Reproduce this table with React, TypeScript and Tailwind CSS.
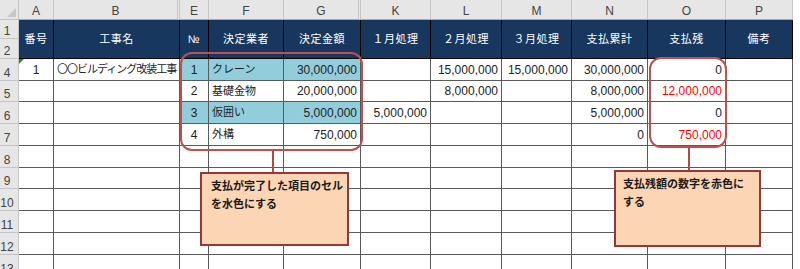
import React from 'react';

const cols = [
  { k: 'A', w: 'w-[35px]', band: 'border-r' },
  { k: 'B', w: 'w-[126px]', band: 'border-r-[3px] border-double' },
  { k: 'E', w: 'w-[29px]', band: 'border-r' },
  { k: 'F', w: 'w-[75px]', band: 'border-r' },
  { k: 'G', w: 'w-[77px]', band: 'border-r-[3px] border-double' },
  { k: 'K', w: 'w-[70px]', band: 'border-r' },
  { k: 'L', w: 'w-[71px]', band: 'border-r' },
  { k: 'M', w: 'w-[70px]', band: 'border-r' },
  { k: 'N', w: 'w-[76px]', band: 'border-r' },
  { k: 'O', w: 'w-[78px]', band: 'border-r' },
  { k: 'P', w: 'w-[67px]', band: 'border-r' },
];

const headers = ['番号', '工事名', '№', '決定業者', '決定金額', '１月処理', '２月処理', '３月処理', '支払累計', '支払残', '備考'];

type Cell = { v?: string; align?: 'l' | 'c' | 'r'; fill?: boolean; red?: boolean; tight?: boolean };

const dataRows: { n: number; h: string; cells: Cell[] }[] = [
  {
    n: 4,
    h: 'h-[22px]',
    cells: [
      { v: '1', align: 'c' },
      { v: '〇〇ビルディング改装工事', align: 'l', tight: true },
      { v: '1', align: 'c', fill: true },
      { v: 'クレーン', align: 'l', fill: true },
      { v: '30,000,000', align: 'r', fill: true },
      {},
      { v: '15,000,000', align: 'r' },
      { v: '15,000,000', align: 'r' },
      { v: '30,000,000', align: 'r' },
      { v: '0', align: 'r' },
      {},
    ],
  },
  {
    n: 5,
    h: 'h-[21px]',
    cells: [
      {},
      {},
      { v: '2', align: 'c' },
      { v: '基礎金物', align: 'l' },
      { v: '20,000,000', align: 'r' },
      {},
      { v: '8,000,000', align: 'r' },
      {},
      { v: '8,000,000', align: 'r' },
      { v: '12,000,000', align: 'r', red: true },
      {},
    ],
  },
  {
    n: 6,
    h: 'h-[22px]',
    cells: [
      {},
      {},
      { v: '3', align: 'c', fill: true },
      { v: '仮囲い', align: 'l', fill: true },
      { v: '5,000,000', align: 'r', fill: true },
      { v: '5,000,000', align: 'r' },
      {},
      {},
      { v: '5,000,000', align: 'r' },
      { v: '0', align: 'r' },
      {},
    ],
  },
  {
    n: 7,
    h: 'h-[22px]',
    cells: [
      {},
      {},
      { v: '4', align: 'c' },
      { v: '外構', align: 'l' },
      { v: '750,000', align: 'r' },
      {},
      {},
      {},
      { v: '0', align: 'r' },
      { v: '750,000', align: 'r', red: true },
      {},
    ],
  },
  { n: 8, h: 'h-[22px]', cells: [] },
  { n: 9, h: 'h-[21px]', cells: [] },
  { n: 10, h: 'h-[22px]', cells: [] },
  { n: 11, h: 'h-[22px]', cells: [] },
  { n: 12, h: 'h-[22px]', cells: [] },
  { n: 13, h: 'h-[22px]', cells: [] },
];

function RowLabel({ n, h }: { n: number; h: string }) {
  return (
    <div className={`w-[19px] shrink-0 ${h} bg-[#e6e6e6] border-r border-b border-[#c4c4c4] flex items-end`}>
      <span className="w-[14px] text-center text-[12px] leading-none text-[#444] pb-[1px]">{n}</span>
    </div>
  );
}

export default function App() {
  return (
    <div className="relative w-[800px] h-[269px] overflow-hidden bg-white font-['Liberation_Sans','Noto_Sans_CJK_JP',sans-serif] text-[#222]">
      {/* column letters */}
      <div className="flex h-[20px]">
        <div className="w-[19px] shrink-0 bg-[#e6e6e6] border-r border-b border-[#c4c4c4] relative">
          <div className="absolute right-[2px] bottom-[2px] w-0 h-0 border-l-[9px] border-l-transparent border-b-[9px] border-b-[#c8c8c8]" />
        </div>
        {cols.map((c) => (
          <div
            key={c.k}
            className={`${c.w} shrink-0 bg-[#e6e6e6] ${c.band} border-b border-[#c6c6c6] border-b-[#a8a8a8] flex items-center justify-center pt-[2px] text-[12px] text-[#444]`}
          >
            {c.k}
          </div>
        ))}
        <div className="flex-1 bg-white" />
      </div>

      {/* header rows 1-2 */}
      <div className="flex h-[39px]">
        <div className="w-[19px] shrink-0 flex flex-col">
          <RowLabel n={1} h="h-[19px]" />
          <RowLabel n={2} h="h-[20px]" />
        </div>
        {cols.map((c, i) => (
          <div
            key={c.k}
            className={`${c.w} shrink-0 bg-[#17375e] border-r border-b border-black flex items-center justify-center text-white text-[11px] tracking-[0.5px]`}
          >
            {headers[i]}
          </div>
        ))}
        <div className="flex-1" />
      </div>

      {/* data rows */}
      {dataRows.map((r) => (
        <div key={r.n} className={`flex ${r.h}`}>
          <RowLabel n={r.n} h={r.h} />
          {cols.map((c, i) => {
            const cell = r.cells[i] || {};
            const align =
              cell.align === 'r'
                ? 'justify-end pr-[3px]'
                : cell.align === 'c'
                ? 'justify-center'
                : 'justify-start pl-[3px]';
            const isNum = cell.align !== 'l';
            return (
              <div
                key={c.k}
                className={`${c.w} shrink-0 relative border-r border-b border-[#5a5a5a] flex items-center overflow-hidden whitespace-nowrap ${align} ${
                  cell.fill ? 'bg-[#92cddc]' : 'bg-white'
                } ${cell.red ? 'text-[#ff0000]' : ''} ${isNum ? 'text-[12px]' : 'text-[11px]'} ${
                  cell.tight ? 'tracking-[-1px]' : ''
                }`}
              >
                {r.n === 4 && i === 0 && (
                  <div className="absolute left-0 top-0 w-0 h-0 border-t-[5px] border-t-[#1e8c3a] border-r-[5px] border-r-transparent" />
                )}
                {cell.v}
              </div>
            );
          })}
          <div className="flex-1" />
        </div>
      ))}

      {/* highlight frames */}
      <div className="absolute left-[180px] top-[52px] w-[183px] h-[99px] border-2 border-[#c0504d] rounded-[12px]" />
      <div className="absolute left-[649px] top-[57px] w-[78px] h-[91px] border-2 border-[#c0504d] rounded-[12px]" />

      {/* connectors */}
      <div className="absolute left-[272px] top-[151px] w-[2px] h-[21px] bg-[#b04a47]" />
      <div className="absolute left-[688px] top-[148px] w-[2px] h-[22px] bg-[#b04a47]" />

      {/* callouts */}
      <div className="absolute left-[200px] top-[172px] w-[149px] h-[74px] bg-[#fcd5b4] border-2 border-[#953735] pl-[9px] pt-[3px] text-[11px] leading-[18px] font-bold text-[#1a1a1a]">
        <div>支払が完了した項目のセル</div>
        <div>を水色にする</div>
      </div>
      <div className="absolute left-[614px] top-[170px] w-[147px] h-[77px] bg-[#fcd5b4] border-2 border-[#953735] pl-[7px] pt-[3px] text-[11px] leading-[18px] font-bold text-[#1a1a1a]">
        <div>支払残額の数字を赤色に</div>
        <div>する</div>
      </div>
    </div>
  );
}
